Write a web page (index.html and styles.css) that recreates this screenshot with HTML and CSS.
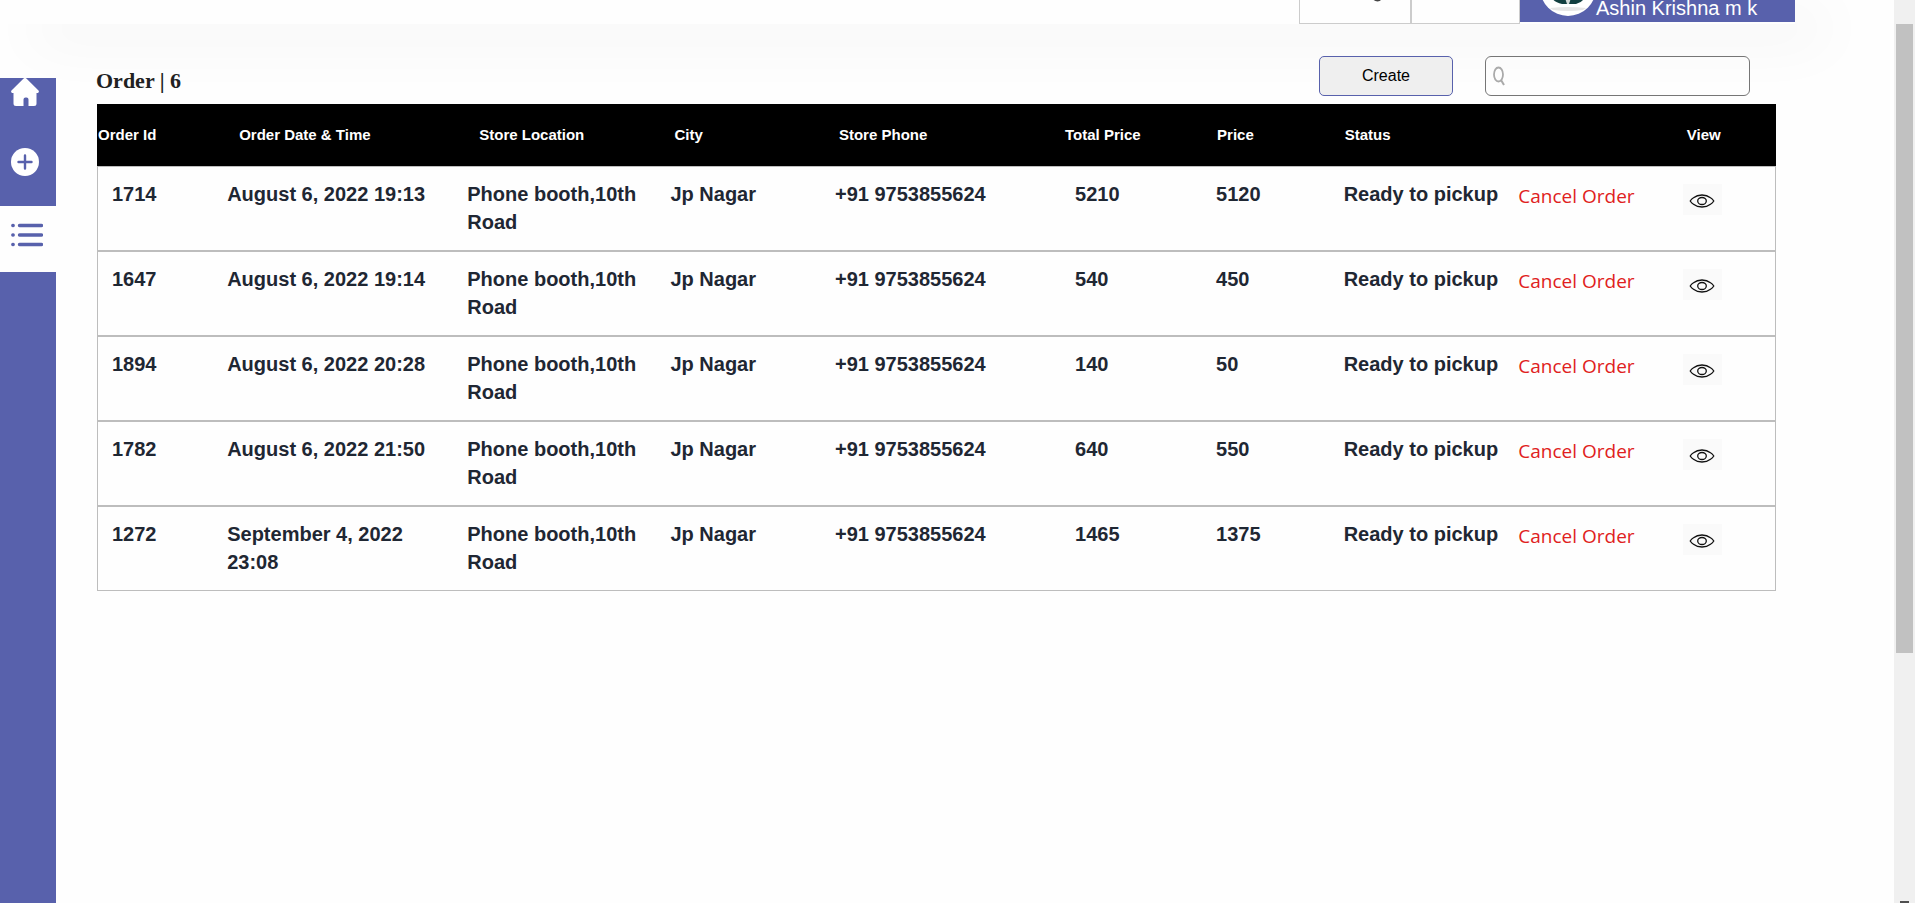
FILE: index.html
```html
<!DOCTYPE html>
<html lang="en">
<head>
<meta charset="utf-8">
<title>Orders</title>
<link rel="stylesheet" href="styles.css">
</head>
<body>
<svg class="sprite" aria-hidden="true">
  <symbol id="eye" viewBox="0 0 26 14">
    <path d="M1.200 7Q2.500 5 4.500 3.800Q8 1 13 1T21.500 3.800Q23.500 5 24.800 7Q23.500 9 21.500 10.200Q18 13 13 13T4.500 10.200Q2.500 9 1.200 7z"/>
    <ellipse cx="13" cy="7" rx="4.300" ry="3.500"/>
  </symbol>
</svg>
<div class="page">
  <header class="topbar">
    <div class="topbar-cell">
      <svg class="topbar-mark" viewBox="0 0 112 24" aria-hidden="true"><path d="M75 0h7.500q-1 1.500-3.500 1.500T75 0z" fill="#444"/></svg>
    </div>
    <div class="topbar-cell"></div>
    <div class="profile">
      <svg class="avatar" viewBox="0 0 56 56" aria-hidden="true">
        <circle cx="28" cy="28" r="28" fill="#fff"/>
        <path d="M10 48Q28 46 46 48L43 50Q28 52 13 50z" fill="#e6e6e6"/>
        <path d="M12 38h32q-1 4-8 6H22q-8-2-10-6z" fill="#123f40"/>
        <path d="M25 38h6l-2 6h-2z" fill="#d5dcda"/>
      </svg>
      <span class="profile-name">Ashin Krishna m k</span>
    </div>
  </header>
  <div class="layout">
    <nav class="sidebar" aria-label="Main">
      <a class="nav-link nav-home" href="#home" aria-label="Home">
        <svg width="28" height="28" viewBox="0 0 28 28"><path d="M12.600.6a2 2 0 0 1 2.800 0L27.500 12.500q1 1.500-.5 2.500h-1.500v10.500q0 2.500-2.500 2.500h-5.500v-6.500q0-2-2-2h-1q-2 0-2 2V28H5q-2.500 0-2.500-2.500V15H1q-1.500-1-.5-2.500z" fill="#fff"/></svg>
      </a>
      <a class="nav-link nav-add" href="#create" aria-label="Create order">
        <svg width="28" height="28" viewBox="0 0 28 28"><circle cx="14" cy="14" r="14" fill="#fff"/><path d="M14 7.500v13M7.500 14h13" stroke="#5861ac" stroke-width="2.400" stroke-linecap="round"/></svg>
      </a>
      <a class="nav-link nav-list" href="#orders" aria-label="Orders" aria-current="page">
        <svg width="32" height="24" viewBox="0 0 32 24" stroke="#5861ac" stroke-width="3.400" stroke-linecap="round"><path d="M8.500 2.500h22M8.500 12h22M8.500 21.500h22"/><path d="M1.800 2.500h.4M1.800 12h.4M1.800 21.500h.4"/></svg>
      </a>
    </nav>
    <main class="content">
      <div class="toolbar">
        <h1 class="title">Order | 6</h1>
        <button class="create" type="button">Create</button>
        <label class="search">
          <svg width="12" height="20" viewBox="0 0 12 20" fill="none" stroke="#aaa"><ellipse cx="5.500" cy="8.500" rx="4.500" ry="7" stroke-width="1.800"/><path d="M8 14l3 5" stroke-width="2"/></svg>
          <input class="search-input" type="text" aria-label="Search orders">
        </label>
      </div>
      <table class="orders">
        <colgroup>
          <col class="c-id"><col class="c-date"><col class="c-store"><col class="c-city"><col class="c-phone"><col class="c-total"><col class="c-price"><col class="c-status"><col class="c-cancel"><col class="c-view">
        </colgroup>
        <thead>
          <tr><th class="flush">Order Id</th><th class="deep">Order Date &amp; Time</th><th class="deep">Store Location</th><th>City</th><th>Store Phone</th><th class="near">Total Price</th><th class="even">Price</th><th class="even" colspan="2">Status</th><th>View</th></tr>
        </thead>
        <tbody>
          <tr><td>1714</td><td>August 6, 2022 19:13</td><td>Phone booth,10th Road</td><td>Jp Nagar</td><td>+91 9753855624</td><td>5210</td><td>5120</td><td>Ready to pickup</td><td class="action"><a class="cancel" href="#cancel">Cancel Order</a></td><td class="action"><button class="view" type="button" aria-label="View order 1714"><svg width="26" height="14"><use href="#eye"/></svg></button></td></tr>
          <tr><td>1647</td><td>August 6, 2022 19:14</td><td>Phone booth,10th Road</td><td>Jp Nagar</td><td>+91 9753855624</td><td>540</td><td>450</td><td>Ready to pickup</td><td class="action"><a class="cancel" href="#cancel">Cancel Order</a></td><td class="action"><button class="view" type="button" aria-label="View order 1647"><svg width="26" height="14"><use href="#eye"/></svg></button></td></tr>
          <tr><td>1894</td><td>August 6, 2022 20:28</td><td>Phone booth,10th Road</td><td>Jp Nagar</td><td>+91 9753855624</td><td>140</td><td>50</td><td>Ready to pickup</td><td class="action"><a class="cancel" href="#cancel">Cancel Order</a></td><td class="action"><button class="view" type="button" aria-label="View order 1894"><svg width="26" height="14"><use href="#eye"/></svg></button></td></tr>
          <tr><td>1782</td><td>August 6, 2022 21:50</td><td>Phone booth,10th Road</td><td>Jp Nagar</td><td>+91 9753855624</td><td>640</td><td>550</td><td>Ready to pickup</td><td class="action"><a class="cancel" href="#cancel">Cancel Order</a></td><td class="action"><button class="view" type="button" aria-label="View order 1782"><svg width="26" height="14"><use href="#eye"/></svg></button></td></tr>
          <tr><td>1272</td><td>September 4, 2022 23:08</td><td>Phone booth,10th Road</td><td>Jp Nagar</td><td>+91 9753855624</td><td>1465</td><td>1375</td><td>Ready to pickup</td><td class="action"><a class="cancel" href="#cancel">Cancel Order</a></td><td class="action"><button class="view" type="button" aria-label="View order 1272"><svg width="26" height="14"><use href="#eye"/></svg></button></td></tr>
        </tbody>
      </table>
    </main>
  </div>
</div>
<div class="scrollbar" aria-hidden="true">
  <div class="scroll-thumb"></div>
  <div class="scroll-arrow"></div>
</div>
</body>
</html>
```

FILE: styles.css
```css
* { box-sizing: border-box; }

body {
  margin: 0;
  display: flex;
  height: 100vh;
  overflow: hidden;
  background: #fefefe;
  font-family: "Liberation Sans", Arial, sans-serif;
  color: #1f2733;
}

.sprite { position: absolute; width: 0; height: 0; }

.page {
  flex: 1;
  min-width: 0;
  display: flex;
  flex-direction: column;
}

/* Header, scrolled mostly out of view */
.topbar {
  display: flex;
  justify-content: flex-end;
  height: 24px;
  margin-right: 99px;
  background: #fefefe;
  box-shadow: 32px 16px 60px rgba(0, 0, 0, 0.06);
}

.topbar-cell {
  width: 112px;
  border: 1px solid #ccc;
  border-top: 0;
}

.topbar-cell + .topbar-cell { width: 109px; }

.topbar-mark { display: block; width: 100%; }

.profile {
  display: flex;
  align-items: flex-end;
  width: 275px;
  height: 22px;
  padding-left: 20px;
  background: #5861ac;
}

.avatar { flex: none; width: 56px; height: 56px; margin-bottom: 6px; }

.profile-name {
  color: #fff;
  font-size: 20px;
  line-height: 24px;
  white-space: nowrap;
  margin-bottom: 2px;
}

.layout { flex: 1; display: flex; min-height: 0; }

/* Sidebar */
.sidebar {
  flex: none;
  width: 56px;
  margin-top: 54px;
  background: #5861ac;
}

.nav-link { display: flex; padding-left: 11px; }
.nav-link svg { display: block; }
.nav-home { height: 70px; }
.nav-add { height: 58px; }
.nav-list { height: 66px; align-items: center; padding-bottom: 8px; background: #fefefe; }

/* Content */
.content { flex: 1; min-width: 0; padding: 32px 118px 0 41px; }

.toolbar {
  display: flex;
  align-items: flex-end;
  height: 40px;
  margin: 0 26px 8px -1px;
}

.title {
  flex: 1;
  margin: 0;
  font: bold 22px/30px "Liberation Serif", "Times New Roman", serif;
  color: #212121;
}

.create {
  width: 134px;
  height: 40px;
  margin-right: 32px;
  border: 1px solid #5861ac;
  border-radius: 5px;
  background: #efefef;
  font: 16px "Liberation Sans", Arial, sans-serif;
  color: #000;
}

.search {
  display: flex;
  align-items: center;
  width: 265px;
  height: 40px;
  padding: 0 8px 0 7px;
  border: 1px solid #767676;
  border-radius: 6px;
}

.search-input {
  flex: 1;
  min-width: 0;
  height: 100%;
  border: 0;
  outline: 0;
  background: transparent;
  font: 16px "Liberation Sans", Arial, sans-serif;
}

/* Orders table */
.orders {
  width: 100%;
  table-layout: fixed;
  border-spacing: 0;
  text-align: left;
}

.c-id { width: 6.8%; }
.c-date { width: 14.3%; }
.c-store { width: 12.1%; }
.c-city { width: 9.8%; }
.c-phone { width: 14.3%; }
.c-total { width: 8.4%; }
.c-price { width: 7.6%; }
.c-status { width: 10.4%; }
.c-cancel { width: 9.8%; }
.c-view { width: 6.5%; }

.orders th {
  height: 62px;
  padding: 0 0 2px 20px;
  background: #000;
  color: #fff;
  font-size: 15px;
}

.orders .flush { padding-left: 1px; }
.orders .near { padding-left: 6px; }
.orders .even { padding-left: 17px; }
.orders .deep { padding-left: 28px; }

.orders td {
  padding: 13px 0 14px 16px;
  border-bottom: 2px solid #bdbdbd;
  vertical-align: top;
  font-size: 20px;
  font-weight: bold;
  line-height: 28px;
}

.orders td:first-child { padding-left: 14px; border-left: 1px solid #bdbdbd; }
.orders td:last-child { border-right: 1px solid #bdbdbd; }
.orders tr:first-child td { border-top: 1px solid #bdbdbd; }
.orders tr:last-child td { border-bottom-width: 1px; }
.orders td.action { padding-top: 15px; white-space: nowrap; }

.cancel {
  color: #e02020;
  font-family: "Open Sans", "Noto Sans", sans-serif;
  font-size: 19px;
  font-weight: normal;
  text-decoration: none;
}

.view {
  display: flex;
  align-items: center;
  justify-content: center;
  width: 39px;
  height: 31px;
  margin-top: 2px;
  padding: 2px 0 0;
  border: 0;
  background: #fafafa;
}

.view svg { fill: none; stroke: #111; stroke-width: 1.3; }

/* Scrollbar */
.scrollbar {
  flex: none;
  display: flex;
  flex-direction: column;
  align-items: center;
  justify-content: space-between;
  width: 21px;
  padding-top: 24px;
  background: #f0f0f0;
}

.scroll-thumb { width: 17px; height: 71.6%; background: #c1c1c1; }

.scroll-arrow { width: 9px; height: 2px; background: #505050; }
```
